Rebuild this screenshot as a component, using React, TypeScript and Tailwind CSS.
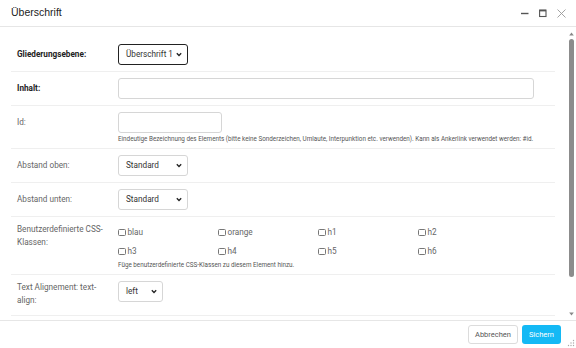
import type { ReactNode } from 'react';

const Chevron = () => (
  <svg className="h-[5px] w-[6px] text-[#222]" viewBox="0 0 6 5" fill="none">
    <path d="M0.8 1.2 L3 3.5 L5.2 1.2" stroke="currentColor" strokeWidth="1.3" />
  </svg>
);

function Select({ value, width, focused }: { value: string; width: string; focused?: boolean }) {
  return (
    <div
      className={`flex h-[21px] items-center justify-between rounded-[3px] bg-white pl-[7px] pr-[5px] text-[8.2px] text-[#333] ${width} ${
        focused ? 'border-[1.5px] border-[#222]' : 'border border-[#d6d6d6]'
      }`}
    >
      <span>{value}</span>
      <Chevron />
    </div>
  );
}

function Row({ label, bold, children, pb = 'pb-[6px]' }: { label: ReactNode; bold?: boolean; children: ReactNode; pb?: string }) {
  return (
    <div className={`flex items-start border-b border-[#efefef] px-[6px] pt-[6px] ${pb}`}>
      <div
        className={`flex min-h-[21px] w-[101px] shrink-0 items-center pr-2 text-[8.2px] leading-[13px] ${
          bold ? 'font-bold text-[#222]' : 'text-[#666]'
        }`}
      >
        {label}
      </div>
      <div className="flex-1">{children}</div>
    </div>
  );
}

function Check({ label }: { label: string }) {
  return (
    <label className="flex h-[19px] items-center gap-[2px] text-[8.2px] text-[#666]">
      <span className="h-[7.5px] w-[7.5px] rounded-[1.5px] border border-[#777] bg-white" />
      {label}
    </label>
  );
}

export default function App() {
  return (
    <div className="flex h-[348px] w-[576px] flex-col overflow-hidden bg-white font-['Roboto',sans-serif]">
      {/* Title bar */}
      <div className="flex h-[27px] shrink-0 items-center justify-between border-b border-[#e6e6e6] pl-[11px] pr-[10px]">
        <span className="font-['Liberation_Sans',Arial,sans-serif] text-[10.5px] text-[#222]">Überschrift</span>
        <div className="flex items-center gap-[10px]">
          <svg className="h-[9px] w-[8px]" viewBox="0 0 8 9">
            <path d="M0 4.5 H7.5" stroke="#555" strokeWidth="1.4" />
          </svg>
          <svg className="h-[9px] w-[8px]" viewBox="0 0 8 9">
            <rect x="0.6" y="1.1" width="6.4" height="6.4" fill="none" stroke="#555" strokeWidth="1.1" />
            <path d="M0.6 1.6 H7" stroke="#555" strokeWidth="1.6" />
          </svg>
          <svg className="h-[9px] w-[9px]" viewBox="0 0 9 9">
            <path d="M0.5 0.5 L8.5 8.5 M8.5 0.5 L0.5 8.5" stroke="#999" strokeWidth="0.9" />
          </svg>
        </div>
      </div>

      {/* Body */}
      <div className="flex min-h-0 flex-1">
        <div className="flex-1 pl-[11px] pr-[12px] pt-[11px]">
          <Row label="Gliederungsebene:" bold>
            <Select value="Überschrift 1" width="w-[70px]" focused />
          </Row>
          <Row label="Inhalt:" bold>
            <div className="h-[21px] w-[416px] rounded-[3px] border border-[#d6d6d6]" />
          </Row>
          <Row label="Id:" pb="pb-[5px]">
            <div className="h-[21px] w-[104px] rounded-[3px] border border-[#d6d6d6]" />
            <p className="mt-[2px] whitespace-nowrap text-[6.3px] leading-[8px] text-[#555]">
              Eindeutige Bezeichnung des Elements (bitte keine Sonderzeichen, Umlaute, Interpunktion etc. verwenden). Kann als Ankerlink verwendet werden: #id.
            </p>
          </Row>
          <Row label="Abstand oben:">
            <Select value="Standard" width="w-[70px]" />
          </Row>
          <Row label="Abstand unten:">
            <Select value="Standard" width="w-[70px]" />
          </Row>
          <Row label="Benutzerdefinierte CSS-Klassen:" pb="pb-[5px]">
            <div className="grid w-[400px] grid-cols-4">
              <Check label="blau" />
              <Check label="orange" />
              <Check label="h1" />
              <Check label="h2" />
              <Check label="h3" />
              <Check label="h4" />
              <Check label="h5" />
              <Check label="h6" />
            </div>
            <p className="text-[6.3px] leading-[8px] text-[#555]">
              Füge benutzerdefinierte CSS-Klassen zu diesem Element hinzu.
            </p>
          </Row>
          <Row label="Text Alignement: text-align:" pb="pb-[8px]">
            <Select value="left" width="w-[45px]" />
          </Row>
        </div>

        {/* Scrollbar */}
        <div className="flex w-[9px] shrink-0 flex-col items-center pb-[4px] pt-[5px]">
          <svg className="h-[4px] w-[5px]" viewBox="0 0 5 4">
            <path d="M2.5 0.5 L4.8 3.5 H0.2 Z" fill="#888" />
          </svg>
          <div className="mt-[3px] h-[238px] w-[5px] rounded-full bg-[#8c8c8c]" />
          <div className="flex-1" />
          <svg className="h-[4px] w-[5px]" viewBox="0 0 5 4">
            <path d="M0.2 0.5 H4.8 L2.5 3.5 Z" fill="#888" />
          </svg>
        </div>
      </div>

      {/* Footer */}
      <div className="relative flex h-[28px] shrink-0 items-center justify-end gap-[4px] border-t border-[#e6e6e6] pr-[15px]">
        <button className="h-[19px] w-[50px] rounded-[3px] border border-[#dcdcdc] bg-white text-[7.5px] text-[#555]">
          Abbrechen
        </button>
        <button className="h-[19px] w-[39px] rounded-[3px] bg-[#14b9f5] text-[7.5px] text-white">Sichern</button>
        <svg className="absolute bottom-[1px] right-[1px] h-[8px] w-[8px]" viewBox="0 0 8 8">
          <circle cx="6.5" cy="1.5" r="0.7" fill="#aaa" />
          <circle cx="4" cy="4" r="0.7" fill="#aaa" />
          <circle cx="6.5" cy="4" r="0.7" fill="#aaa" />
          <circle cx="1.5" cy="6.5" r="0.7" fill="#aaa" />
          <circle cx="4" cy="6.5" r="0.7" fill="#aaa" />
          <circle cx="6.5" cy="6.5" r="0.7" fill="#aaa" />
        </svg>
      </div>
    </div>
  );
}
